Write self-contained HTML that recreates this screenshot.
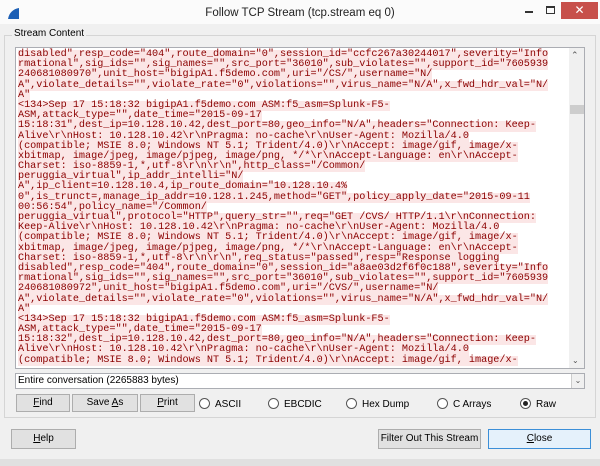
<!DOCTYPE html>
<html><head><style>
*{margin:0;padding:0;box-sizing:border-box}
body{width:600px;height:466px;background:#f0f0f0;font-family:"Liberation Sans",sans-serif;font-size:11px;position:relative;overflow:hidden;color:#000}
.abs{position:absolute}
#title{left:0;top:0;width:600px;height:24px;background:#fbfbfb}
#grp{left:4px;top:35px;width:592px;height:383px;border:1px solid #d5d5d5}
#lbl{left:12px;top:28px;background:#f0f0f0;padding:0 2px;font-size:10px}
#ta{left:15px;top:47px;width:570px;height:322px;background:#fff;border:1px solid #abadb3;overflow:hidden}
#txt{position:absolute;left:2px;top:2px;font-family:"Liberation Mono",monospace;font-size:10.2px;line-height:10.2px;color:#8b0000;white-space:pre;letter-spacing:-0.02px}
#txt div{background:#fbe6e6;width:fit-content;height:10.2px}
#sb{left:569px;top:48px;width:15px;height:320px;background:#f0f0f0}
.btn{position:absolute;background:#e1e1e1;border:1px solid #adadad;text-align:center;font-size:10px;white-space:nowrap}
.rad{position:absolute;top:398px;font-size:10px}
.rad i{display:inline-block;width:11px;height:11px;border:1px solid #555;border-radius:50%;background:#fff;vertical-align:-2px;margin-right:5px;position:relative}
u{text-decoration:underline}
</style></head><body>
<div id="title" class="abs"></div>
<svg class="abs" style="left:7px;top:8px" width="13" height="11"><path d="M1 11 C2 5 6 1 12 0 L12 11 Z" fill="#1c5fb5"/></svg>
<div class="abs" style="left:0;width:600px;top:7px;text-align:center;font-size:11.5px;color:#222">Follow TCP Stream (tcp.stream eq 0)</div>
<div class="abs" style="left:525px;top:11px;width:8px;height:2px;background:#333"></div>
<div class="abs" style="left:546px;top:6px;width:9px;height:8px;border:1px solid #333;border-top-width:2px"></div>
<div class="abs" style="left:561px;top:2px;width:37px;height:17px;background:#c7504b;color:#fff;text-align:center;font-size:12px;line-height:17px">✕</div>
<div id="grp" class="abs"></div>
<div id="lbl" class="abs">Stream Content</div>
<div id="ta" class="abs"><div id="txt"><div>disabled",resp_code="404",route_domain="0",session_id="ccfc267a30244017",severity="Info</div><div>rmational",sig_ids="",sig_names="",src_port="36010",sub_violates="",support_id="7605939</div><div>240681080970",unit_host="bigipA1.f5demo.com",uri="/CS/",username="N/</div><div>A",violate_details="",violate_rate="0",violations="",virus_name="N/A",x_fwd_hdr_val="N/</div><div>A"</div><div>&lt;134&gt;Sep 17 15:18:32 bigipA1.f5demo.com ASM:f5_asm=Splunk-F5-</div><div>ASM,attack_type="",date_time="2015-09-17</div><div>15:18:31",dest_ip=10.128.10.42,dest_port=80,geo_info="N/A",headers="Connection: Keep-</div><div>Alive\r\nHost: 10.128.10.42\r\nPragma: no-cache\r\nUser-Agent: Mozilla/4.0</div><div>(compatible; MSIE 8.0; Windows NT 5.1; Trident/4.0)\r\nAccept: image/gif, image/x-</div><div>xbitmap, image/jpeg, image/pjpeg, image/png, */*\r\nAccept-Language: en\r\nAccept-</div><div>Charset: iso-8859-1,*,utf-8\r\n\r\n",http_class="/Common/</div><div>peruggia_virtual",ip_addr_intelli="N/</div><div>A",ip_client=10.128.10.4,ip_route_domain="10.128.10.4%</div><div>0",is_trunct=,manage_ip_addr=10.128.1.245,method="GET",policy_apply_date="2015-09-11</div><div>00:56:54",policy_name="/Common/</div><div>peruggia_virtual",protocol="HTTP",query_str="",req="GET /CVS/ HTTP/1.1\r\nConnection:</div><div>Keep-Alive\r\nHost: 10.128.10.42\r\nPragma: no-cache\r\nUser-Agent: Mozilla/4.0</div><div>(compatible; MSIE 8.0; Windows NT 5.1; Trident/4.0)\r\nAccept: image/gif, image/x-</div><div>xbitmap, image/jpeg, image/pjpeg, image/png, */*\r\nAccept-Language: en\r\nAccept-</div><div>Charset: iso-8859-1,*,utf-8\r\n\r\n",req_status="passed",resp="Response logging</div><div>disabled",resp_code="404",route_domain="0",session_id="a8ae03d2f6f0c188",severity="Info</div><div>rmational",sig_ids="",sig_names="",src_port="36010",sub_violates="",support_id="7605939</div><div>240681080972",unit_host="bigipA1.f5demo.com",uri="/CVS/",username="N/</div><div>A",violate_details="",violate_rate="0",violations="",virus_name="N/A",x_fwd_hdr_val="N/</div><div>A"</div><div>&lt;134&gt;Sep 17 15:18:32 bigipA1.f5demo.com ASM:f5_asm=Splunk-F5-</div><div>ASM,attack_type="",date_time="2015-09-17</div><div>15:18:32",dest_ip=10.128.10.42,dest_port=80,geo_info="N/A",headers="Connection: Keep-</div><div>Alive\r\nHost: 10.128.10.42\r\nPragma: no-cache\r\nUser-Agent: Mozilla/4.0</div><div>(compatible; MSIE 8.0; Windows NT 5.1; Trident/4.0)\r\nAccept: image/gif, image/x-</div></div></div>
<div id="sb" class="abs"></div>
<div class="abs" style="left:571px;top:50px;font-size:9px;color:#555">&#8963;</div>
<div class="abs" style="left:570px;top:105px;width:14px;height:9px;background:#cdcdcd"></div>
<div class="abs" style="left:572px;top:356px;font-size:8px;color:#555">&#8964;</div>
<div class="abs" style="left:15px;top:373px;width:570px;height:16px;background:#fff;border:1px solid #abadb3;font-size:10px;line-height:14px;padding-left:2px">Entire conversation (2265883 bytes)</div>
<div class="abs" style="left:571px;top:374px;width:13px;height:14px;border-left:1px solid #ccc;background:#f0f0f0;font-size:8px;text-align:center;color:#555;line-height:13px">&#8964;</div>
<div class="btn" style="left:16px;top:394px;width:54px;height:18px;line-height:16px"><u>F</u>ind</div>
<div class="btn" style="left:72px;top:394px;width:66px;height:18px;line-height:16px">Save <u>A</u>s</div>
<div class="btn" style="left:140px;top:394px;width:55px;height:18px;line-height:16px"><u>P</u>rint</div>
<div class="rad" style="left:199px"><i></i>ASCII</div>
<div class="rad" style="left:268px"><i></i>EBCDIC</div>
<div class="rad" style="left:346px"><i></i>Hex Dump</div>
<div class="rad" style="left:437px"><i></i>C Arrays</div>
<div class="rad" style="left:520px"><i><b style="position:absolute;left:2px;top:2px;width:5px;height:5px;border-radius:50%;background:#222"></b></i>Raw</div>
<div class="btn" style="left:11px;top:429px;width:65px;height:20px;line-height:18px"><u>H</u>elp</div>
<div class="btn" style="left:378px;top:429px;width:103px;height:20px;line-height:18px">Filter Out This Stream</div>
<div class="btn" style="left:488px;top:429px;width:103px;height:20px;line-height:18px;border-color:#3c8fd8;background:#e5f1fb"><u>C</u>lose</div>
<div class="abs" style="left:0;top:459px;width:600px;height:7px;background:#e0e0e0"></div>
</body></html>
